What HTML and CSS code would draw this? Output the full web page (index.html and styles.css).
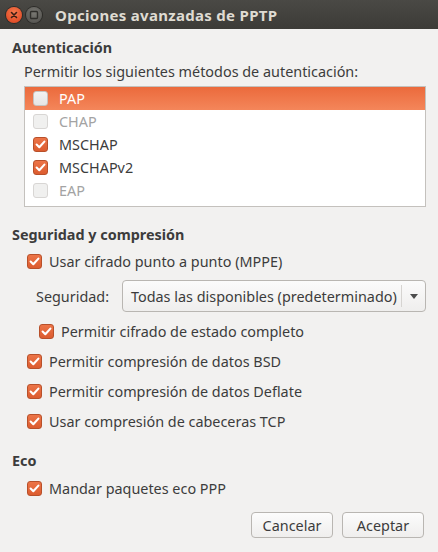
FILE: index.html
```html
<!DOCTYPE html>
<html lang="es">
<head>
<meta charset="utf-8">
<title>Opciones avanzadas de PPTP</title>
<link rel="stylesheet" href="styles.css">
</head>
<body>
<div class="window">
  <div class="titlebar">
    <span class="wbtn close"><svg viewBox="0 0 16 16" width="16" height="16"><path d="M5.5 5.5 L10.5 10.5 M10.5 5.5 L5.5 10.5" stroke="#3a1e14" stroke-width="1.6" stroke-linecap="round"/></svg></span>
    <span class="wbtn maxi"><svg viewBox="0 0 16 16" width="16" height="16"><rect x="4.5" y="4.5" width="7" height="7" rx="1" fill="none" stroke="#2f2e2b" stroke-width="1.4"/></svg></span>
    <span class="title">Opciones avanzadas de PPTP</span>
  </div>
  <div class="content">
    <div class="heading h-auth">Autenticación</div>
    <div class="label indent">Permitir los siguientes métodos de autenticación:</div>
    <div class="list">
      <div class="lrow selected"><span class="cb"></span><span>PAP</span></div>
      <div class="lrow disabled"><span class="cb"></span><span>CHAP</span></div>
      <div class="lrow"><span class="cb on"><svg viewBox="0 0 15 15" width="15" height="15"><path d="M3.6 7.6 L6.3 10.2 L11.4 4.6" fill="none" stroke="#fff" stroke-width="2.1" stroke-linecap="round" stroke-linejoin="round"/></svg></span><span>MSCHAP</span></div>
      <div class="lrow"><span class="cb on"><svg viewBox="0 0 15 15" width="15" height="15"><path d="M3.6 7.6 L6.3 10.2 L11.4 4.6" fill="none" stroke="#fff" stroke-width="2.1" stroke-linecap="round" stroke-linejoin="round"/></svg></span><span>MSCHAPv2</span></div>
      <div class="lrow disabled"><span class="cb"></span><span>EAP</span></div>
    </div>

    <div class="heading h-sec">Seguridad y compresión</div>
    <div class="crow indent-s"><span class="cb on"><svg viewBox="0 0 15 15" width="15" height="15"><path d="M3.6 7.6 L6.3 10.2 L11.4 4.6" fill="none" stroke="#fff" stroke-width="2.1" stroke-linecap="round" stroke-linejoin="round"/></svg></span><span>Usar cifrado punto a punto (MPPE)</span></div>
    <div class="combo-row">
      <span class="combo-label">Seguridad:</span>
      <div class="combo"><span class="combo-text">Todas las disponibles (predeterminado)</span><span class="combo-sep"></span><span class="combo-arrow"><svg viewBox="0 0 8 5" width="8" height="5"><path d="M0 0 L8 0 L4 5 Z" fill="#4c4c4c"/></svg></span></div>
    </div>
    <div class="crow indent-d"><span class="cb on"><svg viewBox="0 0 15 15" width="15" height="15"><path d="M3.6 7.6 L6.3 10.2 L11.4 4.6" fill="none" stroke="#fff" stroke-width="2.1" stroke-linecap="round" stroke-linejoin="round"/></svg></span><span>Permitir cifrado de estado completo</span></div>
    <div class="crow indent-s"><span class="cb on"><svg viewBox="0 0 15 15" width="15" height="15"><path d="M3.6 7.6 L6.3 10.2 L11.4 4.6" fill="none" stroke="#fff" stroke-width="2.1" stroke-linecap="round" stroke-linejoin="round"/></svg></span><span>Permitir compresión de datos BSD</span></div>
    <div class="crow indent-s"><span class="cb on"><svg viewBox="0 0 15 15" width="15" height="15"><path d="M3.6 7.6 L6.3 10.2 L11.4 4.6" fill="none" stroke="#fff" stroke-width="2.1" stroke-linecap="round" stroke-linejoin="round"/></svg></span><span>Permitir compresión de datos Deflate</span></div>
    <div class="crow indent-s"><span class="cb on"><svg viewBox="0 0 15 15" width="15" height="15"><path d="M3.6 7.6 L6.3 10.2 L11.4 4.6" fill="none" stroke="#fff" stroke-width="2.1" stroke-linecap="round" stroke-linejoin="round"/></svg></span><span>Usar compresión de cabeceras TCP</span></div>

    <div class="heading h-eco">Eco</div>
    <div class="crow indent-s"><span class="cb on"><svg viewBox="0 0 15 15" width="15" height="15"><path d="M3.6 7.6 L6.3 10.2 L11.4 4.6" fill="none" stroke="#fff" stroke-width="2.1" stroke-linecap="round" stroke-linejoin="round"/></svg></span><span>Mandar paquetes eco PPP</span></div>

    <div class="buttons">
      <button class="btn">Cancelar</button>
      <button class="btn">Aceptar</button>
    </div>
  </div>
</div>
</body>
</html>
```
FILE: styles.css
```css
html, body {
  margin: 0;
  padding: 0;
  background: #f2f1f0;
}
body {
  font-family: "Noto Sans", "Open Sans", sans-serif;
  font-size: 14.4px;
  color: #3c3c3c;
}
.window {
  width: 438px;
  height: 552px;
  display: flex;
  flex-direction: column;
}
.titlebar {
  height: 29px;
  flex: none;
  background: linear-gradient(#4a4945, #3c3b37);
  display: flex;
  align-items: center;
  padding-left: 6px;
  box-sizing: border-box;
}
.wbtn {
  width: 16px;
  height: 16px;
  border-radius: 50%;
  display: inline-flex;
  margin-right: 4px;
}
.wbtn.close {
  background: radial-gradient(circle at 50% 35%, #f47a4d, #e3502a 70%, #c8431f);
  box-shadow: 0 0 0 1px #2c2b28;
}
.wbtn.maxi {
  background: radial-gradient(circle at 50% 35%, #7a7974, #5a5955 70%, #4a4945);
  box-shadow: 0 0 0 1px #2c2b28;
}
.title {
  margin-left: 9px;
  font-weight: bold;
  color: #dfdbd2;
  font-size: 15px;
  letter-spacing: 0.3px;
}
.content {
  display: flex;
  flex-direction: column;
  padding: 0 12px;
}
.heading {
  font-weight: bold;
  height: 20px;
  line-height: 20px;
}
.h-auth { margin-top: 9px; }
.h-sec { margin-top: 18px; }
.h-eco { margin-top: 15px; }
.label {
  height: 20px;
  line-height: 20px;
  margin-top: 4px;
}
.indent { margin-left: 12px; }
.list {
  margin: 4px 0 0 12px;
  height: 119px;
  border: 1px solid #c4c1bd;
  background: #ffffff;
}
.lrow {
  height: 23px;
  display: flex;
  align-items: center;
  padding-left: 8px;
}
.lrow .cb { margin-right: 11px; }
.lrow.selected {
  background: linear-gradient(#eb6a3c, #f4865a);
  color: #ffffff;
}
.lrow.disabled { color: #a3a3a3; }
.lrow.disabled .cb {
  background: #f0f0ef;
  border-color: #d8d6d4;
}
.cb {
  width: 13px;
  height: 13px;
  border: 1px solid #c6c3c0;
  border-radius: 3px;
  background: linear-gradient(#f2f2f1, #e6e5e4);
  flex: none;
  display: inline-flex;
  align-items: center;
  justify-content: center;
}
.cb.on {
  background: linear-gradient(#ec7447, #dc5c2f);
  border-color: #b8502a;
}
.cb svg { flex: none; }
.crow {
  height: 30px;
  display: flex;
  align-items: center;
}
.crow .cb { margin-right: 7px; }
.indent-s { margin-left: 15px; }
.indent-d { margin-left: 27px; }
.h-sec + .crow { margin-top: 1px; }
.combo-row {
  display: flex;
  align-items: center;
  margin-top: 4px;
  margin-bottom: 4px;
  margin-left: 24px;
}
.combo-label { width: 86px; flex: none; }
.combo {
  flex: 1;
  height: 30px;
  border: 1px solid #b9b6b2;
  border-radius: 4px;
  background: linear-gradient(#fbfbfb, #efeeed);
  display: flex;
  align-items: center;
  padding-left: 8px;
}
.combo-text { flex: 1; }
.combo-sep {
  width: 1px;
  height: 22px;
  background: #d6d4d1;
}
.combo-arrow {
  width: 23px;
  display: flex;
  justify-content: center;
  align-items: center;
}
.h-eco + .crow { margin-top: 2px; }
.buttons {
  display: flex;
  justify-content: flex-end;
  gap: 9px;
  margin-top: 9px;
  margin-right: 2px;
}
.btn {
  width: 82px;
  height: 26px;
  font-family: inherit;
  font-size: 14.4px;
  color: #3c3c3c;
  border: 1px solid #b9b6b2;
  border-radius: 4px;
  background: linear-gradient(#fcfcfc, #efeeed);
  padding: 0;
}
```
